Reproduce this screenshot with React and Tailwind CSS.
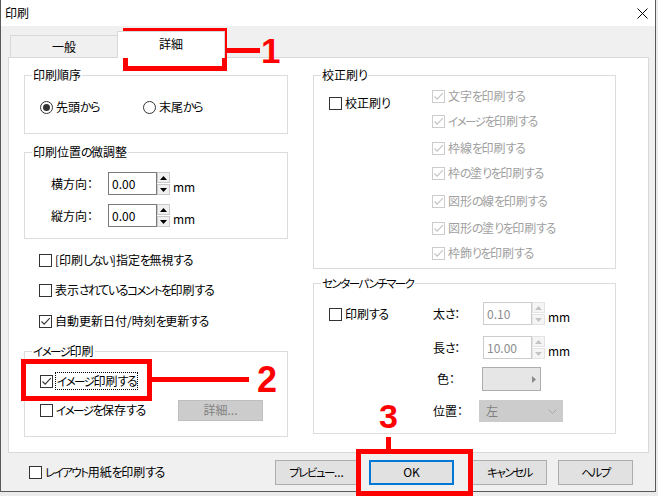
import React from "react";

function T({ s }) {
  const parts = s.split(/([\u3041-\u309f]+|[\u30a0-\u30ff]+)/);
  return parts.map((p, i) => {
    if (!p) return null;
    if (/^[\u3041-\u309f]+$/.test(p))
      return (
        <span key={i} className="tracking-[-1.5px]">
          {p}
        </span>
      );
    if (/^[\u30a0-\u30ff]+$/.test(p))
      return (
        <span key={i} className="text-[11.5px] tracking-[-1.5px]">
          {p}
        </span>
      );
    return <React.Fragment key={i}>{p}</React.Fragment>;
  });
}

const tx = (c) => (typeof c === "string" ? <T s={c} /> : c);

const Check = ({ color }) => (
  <svg width="11" height="11" viewBox="0 0 11 11" className="block">
    <path d="M1.5 5.5 L4.2 8.2 L9.8 2.2" fill="none" stroke={color} strokeWidth="1.1" />
  </svg>
);

function CB({ checked, disabled, focus, children, className = "" }) {
  return (
    <div className={"flex items-center h-[16px] " + className}>
      <span
        className={
          "w-[13px] h-[13px] shrink-0 bg-white border flex items-center justify-center " +
          (disabled ? "border-[#cccccc]" : "border-[#333333]")
        }
      >
        {checked && <Check color={disabled ? "#c2c2c2" : "#333333"} />}
      </span>
      {focus ? (
        <span className="ml-[2px] px-[1px] border border-dotted border-black leading-[15px] whitespace-nowrap">
          {tx(children)}
        </span>
      ) : (
        <span className={"ml-[3px] whitespace-nowrap " + (disabled ? "text-[#a0a0a0]" : "text-black")}>
          {tx(children)}
        </span>
      )}
    </div>
  );
}

function Radio({ checked, children, className = "" }) {
  return (
    <div className={"flex items-center h-[16px] " + className}>
      <span className="w-[13px] h-[13px] shrink-0 rounded-full border border-[#333333] bg-white flex items-center justify-center">
        {checked && <span className="w-[7px] h-[7px] rounded-full bg-[#333333]" />}
      </span>
      <span className="ml-[3px] whitespace-nowrap">{tx(children)}</span>
    </div>
  );
}

function Spin({ value, disabled }) {
  const tri = disabled ? "#c4c4c4" : "#000000";
  const btn =
    "h-[11px] border flex items-center justify-center " +
    (disabled ? "border-[#e3e3e3] bg-[#f5f5f5]" : "border-[#c9c9c9] bg-[#f0f0f0]");
  return (
    <div className="flex items-end">
      <div
        className={
          "w-[49px] h-[23px] bg-white border pl-[3px] leading-[21px] " +
          (disabled ? "border-[#cccccc] text-[#8c8c8c]" : "border-[#7a7a7a] text-black")
        }
      >
        {value}
      </div>
      <div className="flex flex-col w-[13px] h-[23px] justify-between">
        <div className={btn}>
          <svg width="7" height="4" viewBox="0 0 7 4" className="block">
            <path d="M0 4 L3.5 0 L7 4Z" fill={tri} />
          </svg>
        </div>
        <div className={btn}>
          <svg width="7" height="4" viewBox="0 0 7 4" className="block">
            <path d="M0 0 L3.5 4 L7 0Z" fill={tri} />
          </svg>
        </div>
      </div>
      <span className="ml-[3px] leading-[14px] mb-[1px]">mm</span>
    </div>
  );
}

function Legend({ children }) {
  return <legend className="ml-[7px] px-[1px] leading-[16px] whitespace-nowrap">{tx(children)}</legend>;
}

export default function App() {
  return (
    <div className="relative w-[658px] h-[496px] overflow-hidden bg-[#ececec] font-['Noto_Sans_CJK_JP',sans-serif] text-[12px] leading-[16px] text-black [font-feature-settings:'palt']">
      {/* window */}
      <div className="w-[656px] h-[492px] flex flex-col border-l border-r border-b border-[#5a5a5a] bg-[#f0f0f0]">
        {/* title bar */}
        <div className="h-[26px] bg-white flex items-center justify-between pl-[4px] pr-[7px] shrink-0">
          <span>印刷</span>
          <svg width="11" height="11" viewBox="0 0 11 11" className="block">
            <path d="M0.5 0.5 L10.5 10.5 M10.5 0.5 L0.5 10.5" stroke="#000" strokeWidth="1" />
          </svg>
        </div>

        {/* tabs */}
        <div className="h-[31px] flex items-end pl-[9px] shrink-0">
          <div className="w-[107px] h-[22px] border border-b-0 border-r-0 border-[#d9d9d9] bg-[#f0f0f0] flex items-center justify-center">
            一般
          </div>
          <div className="relative z-10 -mb-px w-[108px] h-[27px] bg-white border border-b-0 border-[#d9d9d9] flex items-center justify-center pb-[2px]">
            詳細
          </div>
        </div>

        {/* panel */}
        <div className="ml-[7px] w-[641px] h-[396px] shrink-0 border border-[#d9d9d9] bg-white flex pt-[9px]">
          {/* left column */}
          <div className="ml-[15px] w-[264px] flex flex-col">
            <fieldset className="border border-[#dcdcdc]">
              <Legend>印刷順序</Legend>
              <div className="pl-[15px] pt-[16px] pb-[18px] flex">
                <Radio checked className="w-[103px]">先頭から</Radio>
                <Radio>末尾から</Radio>
              </div>
            </fieldset>

            <fieldset className="mt-[10px] border border-[#dcdcdc]">
              <Legend>印刷位置の微調整</Legend>
              <div className="pl-[26px] pt-[12px] pb-[11px] flex flex-col gap-[9px]">
                <div className="flex items-start">
                  <span className="w-[57px] leading-[23px]">横方向：</span>
                  <Spin value="0.00" />
                </div>
                <div className="flex items-start">
                  <span className="w-[57px] leading-[23px]">縦方向：</span>
                  <Spin value="0.00" />
                </div>
              </div>
            </fieldset>

            <div className="pl-[15px] flex flex-col">
              <CB className="mt-[13px]">[印刷しない]指定を無視する</CB>
              <CB className="mt-[14px]">表示されているコメントを印刷する</CB>
              <CB checked className="mt-[15px]">自動更新日付/時刻を更新する</CB>
            </div>

            <fieldset className="mt-[14px] border border-[#dcdcdc]">
              <Legend>イメージ印刷</Legend>
              <div className="pl-[15px] pt-[14px] pb-[15px] flex flex-col">
                <CB checked focus>イメージ印刷する</CB>
                <div className="mt-[10px] h-[22px] flex items-center">
                  <CB className="w-[138px]">イメージを保存する</CB>
                  <div className="w-[85px] h-[21px] bg-[#cccccc] border border-[#bfbfbf] text-[#838383] flex items-center justify-center">
                    詳細...
                  </div>
                </div>
              </div>
            </fieldset>
          </div>

          {/* right column */}
          <div className="ml-[25px] w-[303px] flex flex-col">
            <fieldset className="border border-[#dcdcdc]">
              <Legend>校正刷り</Legend>
              <div className="pl-[15px] pt-[5px] pb-[7px] flex">
                <CB className="w-[103px] mt-[7px]">校正刷り</CB>
                <div className="flex flex-col">
                  <CB checked disabled>文字を印刷する</CB>
                  <CB checked disabled className="mt-[9px]">イメージを印刷する</CB>
                  <CB checked disabled className="mt-[11px]">枠線を印刷する</CB>
                  <CB checked disabled className="mt-[9px]">枠の塗りを印刷する</CB>
                  <CB checked disabled className="mt-[12px]">図形の線を印刷する</CB>
                  <CB checked disabled className="mt-[11px]">図形の塗りを印刷する</CB>
                  <CB checked disabled className="mt-[9px]">枠飾りを印刷する</CB>
                </div>
              </div>
            </fieldset>

            <fieldset className="mt-[6px] border border-[#dcdcdc]">
              <Legend>センターパンチマーク</Legend>
              <div className="pl-[15px] pt-[11px] pb-[11px] flex">
                <CB className="w-[104px] mt-[4px]">印刷する</CB>
                <div className="flex flex-col">
                  <div className="flex items-start">
                    <span className="w-[50px] leading-[23px]">
                      <T s="太さ：" />
                    </span>
                    <Spin value="0.10" disabled />
                  </div>
                  <div className="mt-[11px] flex items-start">
                    <span className="w-[50px] leading-[23px]">
                      <T s="長さ：" />
                    </span>
                    <Spin value="10.00" disabled />
                  </div>
                  <div className="mt-[8px] flex items-center h-[24px]">
                    <span className="w-[49px] pl-[4px]">色：</span>
                    <div className="w-[59px] h-[24px] bg-[#e6e6e6] border border-[#adadad] flex items-center justify-end pr-[4px]">
                      <svg width="4" height="7" viewBox="0 0 4 7" className="block">
                        <path d="M0 0 L4 3.5 L0 7Z" fill="#8a8a8a" />
                      </svg>
                    </div>
                  </div>
                  <div className="mt-[9px] flex items-center h-[22px]">
                    <span className="w-[46px]">位置：</span>
                    <div className="w-[84px] h-[22px] bg-[#cccccc] border border-[#cccccc] text-[#7f7f7f] flex items-center justify-between pl-[6px] pr-[5px]">
                      <span>左</span>
                      <svg width="9" height="5" viewBox="0 0 9 5" className="block">
                        <path d="M0.5 0.5 L4.5 4.5 L8.5 0.5" fill="none" stroke="#a8a8a8" strokeWidth="1" />
                      </svg>
                    </div>
                  </div>
                </div>
              </div>
            </fieldset>
          </div>
        </div>

        {/* bottom row */}
        <div className="flex items-center pl-[28px] pt-[6px] h-[32px]">
          <CB className="w-[246px]">レイアウト用紙を印刷する</CB>
          <div className="w-[83px] h-[25px] bg-[#e1e1e1] border border-[#adadad] flex items-center justify-center">
            <T s="プレビュー..." />
          </div>
          <div className="ml-[11px] w-[85px] h-[25px] bg-[#e1e1e1] border-2 border-[#0078d7] flex items-center justify-center">
            OK
          </div>
          <div className="ml-[18px] w-[75px] h-[25px] bg-[#e1e1e1] border border-[#adadad] flex items-center justify-center">
            <T s="キャンセル" />
          </div>
          <div className="ml-[11px] w-[75px] h-[25px] bg-[#e1e1e1] border border-[#adadad] flex items-center justify-center">
            <T s="ヘルプ" />
          </div>
        </div>
      </div>

      {/* red annotations */}
      <div className="absolute left-[123px] top-[28px] w-[104px] h-[43px] border-[5px] border-[#ff0000]" />
      <div className="absolute left-[227px] top-[48px] w-[33px] h-[5px] bg-[#ff0000]" />
      <div className="absolute left-[261px] top-[33px] font-['Liberation_Sans',sans-serif] font-bold text-[35px] leading-none text-[#ff0000]">1</div>

      <div className="absolute left-[21px] top-[359px] w-[131px] h-[42px] border-[5px] border-[#ff0000]" />
      <div className="absolute left-[152px] top-[377px] w-[97px] h-[5px] bg-[#ff0000]" />
      <div className="absolute left-[257px] top-[362px] font-['Liberation_Sans',sans-serif] font-bold text-[36px] leading-none text-[#ff0000]">2</div>

      <div className="absolute left-[379px] top-[399px] font-['Liberation_Sans',sans-serif] font-bold text-[34px] leading-none text-[#ff0000]">3</div>
      <div className="absolute left-[386px] top-[437px] w-[5px] h-[12px] bg-[#ff0000]" />
      <div className="absolute left-[356px] top-[449px] w-[117px] h-[47px] border-[5px] border-[#ff0000]" />
    </div>
  );
}
